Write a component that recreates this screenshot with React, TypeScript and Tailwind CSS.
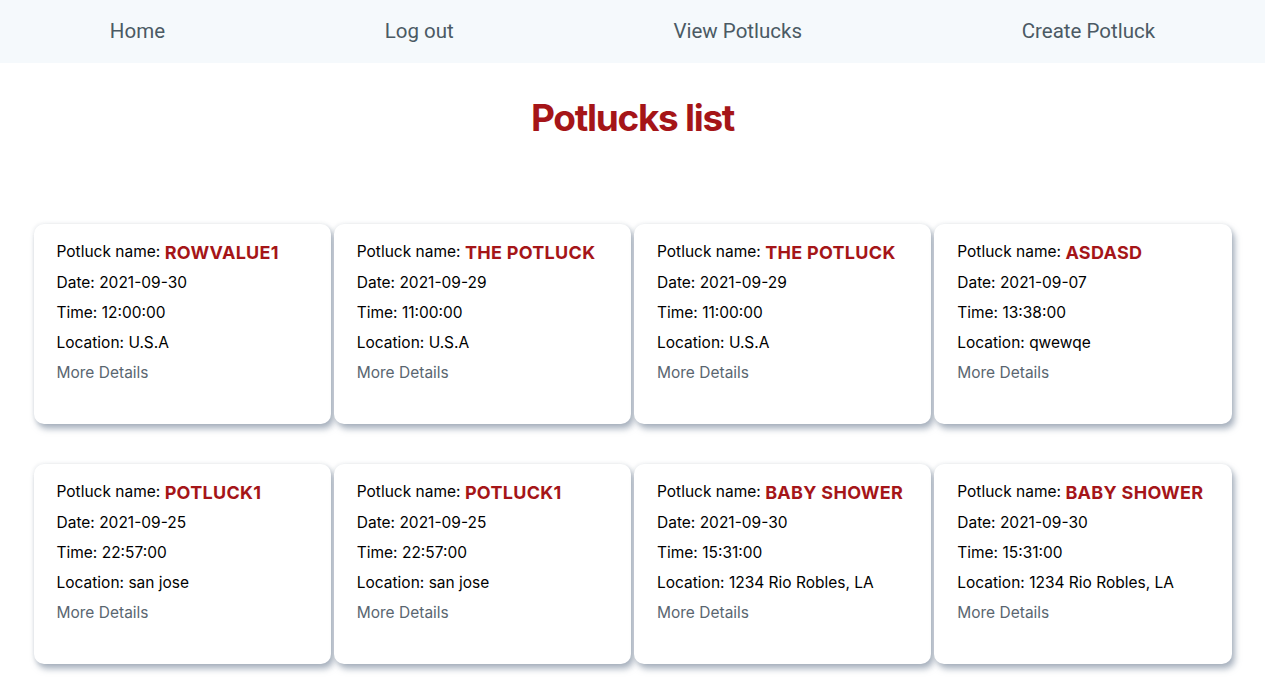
import React from "react";

const items = [
  { name: "ROWVALUE1", date: "2021-09-30", time: "12:00:00", loc: "U.S.A" },
  { name: "THE POTLUCK", date: "2021-09-29", time: "11:00:00", loc: "U.S.A" },
  { name: "THE POTLUCK", date: "2021-09-29", time: "11:00:00", loc: "U.S.A" },
  { name: "ASDASD", date: "2021-09-07", time: "13:38:00", loc: "qwewqe" },
  { name: "POTLUCK1", date: "2021-09-25", time: "22:57:00", loc: "san jose" },
  { name: "POTLUCK1", date: "2021-09-25", time: "22:57:00", loc: "san jose" },
  { name: "BABY SHOWER", date: "2021-09-30", time: "15:31:00", loc: "1234 Rio Robles, LA" },
  { name: "BABY SHOWER", date: "2021-09-30", time: "15:31:00", loc: "1234 Rio Robles, LA" },
];

export default function App() {
  return (
    <div className="min-h-screen bg-white" style={{ fontFamily: "Inter, 'Noto Sans', sans-serif" }}>
      <nav
        className="h-[63px] bg-[#f5f9fc] flex items-center justify-around text-[20.5px] text-[#4b5a64]"
        style={{ fontFamily: "Roboto, sans-serif" }}
      >
        <span>Home</span>
        <span>Log out</span>
        <span>View Potlucks</span>
        <span>Create Potluck</span>
      </nav>
      <h1 className="text-center text-[37px] font-bold tracking-[-1.3px] text-[#a51518] mt-[31px] leading-[48px]">
        Potlucks list
      </h1>
      <div className="w-[1198px] mx-auto mt-[82px] grid grid-cols-4 gap-x-[3px] gap-y-[40px]">
        {items.map((p, i) => (
          <div
            key={i}
            className="h-[200px] rounded-[10px] bg-white shadow-[0_0_4px_rgba(100,115,135,0.18),3px_5px_6px_rgba(120,135,155,0.6)] pl-[23px] pt-[12px] text-[15.5px] text-black"
          >
            <div className="h-[32px] flex items-center">
              Potluck name:&nbsp;
              <span className="font-bold text-[18px] text-[#a51518] tracking-[0.3px]">{p.name}</span>
            </div>
            <div className="h-[30px] flex items-center">Date: {p.date}</div>
            <div className="h-[30px] flex items-center">Time: {p.time}</div>
            <div className="h-[30px] flex items-center">Location: {p.loc}</div>
            <div className="h-[30px] flex items-center text-[#5a6670]">More Details</div>
          </div>
        ))}
      </div>
    </div>
  );
}
